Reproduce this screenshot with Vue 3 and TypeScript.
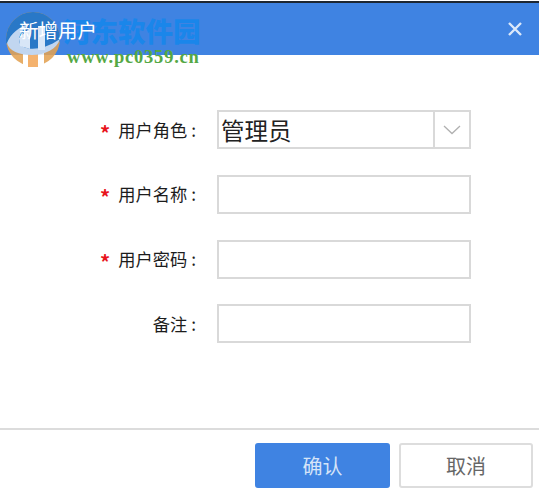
<script setup lang="ts">
interface Field {
  label: string
  required: boolean
}
const fields: Field[] = [
  { label: '用户角色', required: true },
  { label: '用户名称', required: true },
  { label: '用户密码', required: true },
  { label: '备注', required: false },
]
</script>

<template>
  <div class="dialog">
    <header class="title-bar">
      <span class="title">新增用户</span>
      <svg class="close" viewBox="0 0 16 16" width="16" height="16">
        <path d="M2 2 L14 14 M14 2 L2 14" stroke="#dbe8fa" stroke-width="2.4" fill="none" />
      </svg>
    </header>

    <main class="form">
      <div v-for="(f, i) in fields" :key="f.label" class="row">
        <span class="label"><span v-if="f.required" class="star">*</span>{{ f.label }}<span class="colon">:</span></span>
        <div v-if="i === 0" class="select">
          <span class="value">管理员</span>
          <span class="arrow">
            <svg viewBox="0 0 18 10" width="18" height="10">
              <path d="M1 1 L9 8.5 L17 1" stroke="#b0b0b0" stroke-width="1.3" fill="none" />
            </svg>
          </span>
        </div>
        <div v-else class="input"></div>
      </div>
    </main>

    <footer class="footer">
      <button class="btn primary">确认</button>
      <button class="btn">取消</button>
    </footer>

    <div class="watermark">
      <span class="wm-name">河东软件园</span>
      <span class="wm-url">www.pc0359.cn</span>
      <svg class="logo" viewBox="0 0 60 60" width="60" height="60">
        <circle cx="28" cy="29" r="27" fill="#e3a253" />
        <path d="M18 40 H23 V58 H18 Z M33 40 H39 V58 H33 Z" fill="#ffffff" />
        <rect x="23" y="40" width="10" height="17" fill="#f3a85b" />
        <path d="M1 29 A27 27 0 0 1 55 29 L55 31 Q30 50 1 33 Z" fill="#2677c4" />
        <path d="M2 33 C6 23 14 17 24 14 C16 21 12 28 15 34 C20 41 38 41 55 29 C52 39 40 45 27 45 C14 45 4 41 2 33 Z" fill="#d3e2f3" />
        <path d="M14 28 L25 18 L25 39 L15 36 Z" fill="#eef4fb" />
        <rect x="33" y="16" width="7" height="24" fill="#eef4fb" />
      </svg>
    </div>
  </div>
</template>

<style scoped>
.dialog {
  position: relative;
  width: 539px;
  height: 498px;
  background: #ffffff;
  overflow: hidden;
  font-family: "Noto Sans CJK SC", "Liberation Sans", sans-serif;
  display: flex;
  flex-direction: column;
}
.title-bar {
  margin-top: 1px;
  border-top: 2px solid #1d2733;
  height: 52px;
  background: #3f83e2;
  display: flex;
  align-items: center;
  justify-content: space-between;
  padding: 0 16px 0 19px;
  color: #fff;
}
.title {
  position: relative;
  z-index: 4;
  font-size: 19.5px;
}
.close {
  display: block;
}
.form {
  flex: 1;
  padding-top: 55px;
  display: flex;
  flex-direction: column;
  gap: 25.75px;
}
.row {
  display: flex;
  align-items: center;
  height: 39px;
}
.label {
  width: 198px;
  box-sizing: border-box;
  padding-right: 2px;
  text-align: right;
  font-size: 17.25px;
  color: #1c1c1c;
  margin-right: 19px;
}
.colon {
  margin-left: 4px;
}
.star {
  color: #e8141c;
  font-weight: 700;
  font-size: 20px;
  line-height: 1;
  vertical-align: -4px;
  margin-right: 8px;
}
.select,
.input {
  width: 254px;
  height: 39px;
  box-sizing: border-box;
  border: 2px solid #d9d9d9;
  background: #fff;
}
.select {
  display: flex;
  align-items: center;
  justify-content: space-between;
}
.value {
  font-size: 23.5px;
  color: #222;
  padding-left: 2px;
}
.arrow {
  width: 36px;
  height: 100%;
  box-sizing: border-box;
  border-left: 2px solid #d9d9d9;
  display: flex;
  align-items: center;
  justify-content: center;
}
.footer {
  height: 69px;
  border-top: 2px solid #dcdcdc;
  margin-bottom: 1px;
  box-sizing: border-box;
  display: flex;
  justify-content: flex-end;
  gap: 9px;
  padding: 13px 6px 0 0;
}
.btn {
  width: 134px;
  height: 45px;
  box-sizing: border-box;
  border: 2px solid #dddddd;
  border-radius: 3px;
  background: #fff;
  color: #666;
  font-size: 20px;
  font-family: inherit;
  padding: 0;
}
.btn.primary {
  width: 135px;
  background: #3f83e2;
  border-color: #3f83e2;
  color: #d5e4f8;
}
.watermark {
  position: absolute;
  left: 5px;
  top: 10px;
  width: 200px;
  height: 60px;
  pointer-events: none;
}
.logo {
  position: absolute;
  left: 0;
  top: 0;
  z-index: 3;
  opacity: 0.88;
}
.wm-name {
  position: absolute;
  left: 58px;
  top: 2px;
  z-index: 1;
  font-size: 27.5px;
  line-height: 36px;
  font-weight: 900;
  color: #1a86ea;
  white-space: nowrap;
}
.wm-url {
  position: absolute;
  left: 62px;
  top: 36px;
  z-index: 1;
  font-family: "Liberation Serif", serif;
  font-size: 18.5px;
  line-height: 22px;
  font-weight: 700;
  letter-spacing: 0.8px;
  color: #55a845;
  white-space: nowrap;
}
</style>
